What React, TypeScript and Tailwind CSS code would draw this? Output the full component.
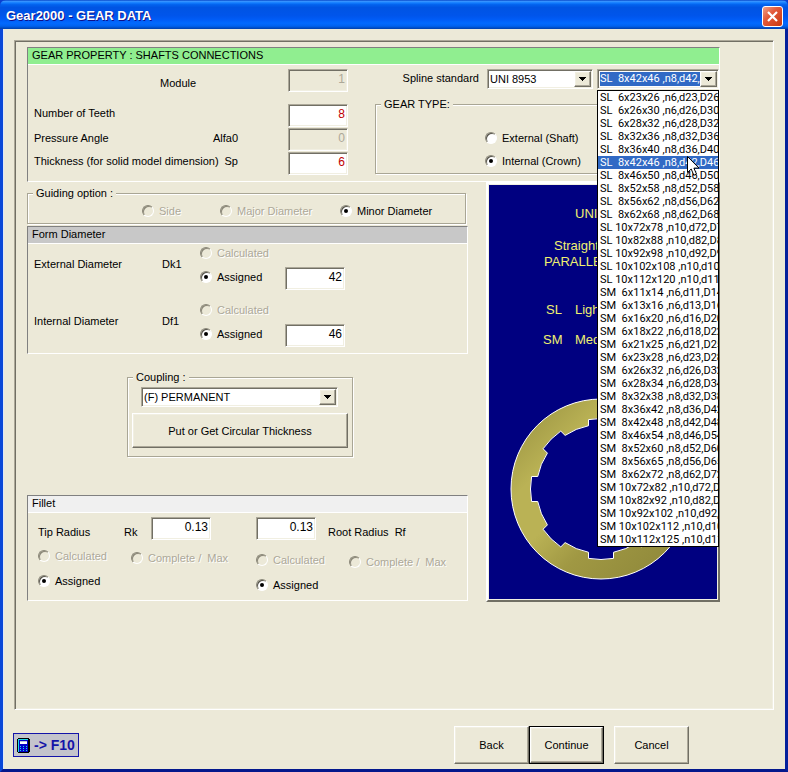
import { useState } from 'react';
import type { ReactNode } from 'react';

const SIZES = [
  'SL  6x23x26 ,n6,d23,D26',
  'SL  6x26x30 ,n6,d26,D30',
  'SL  6x28x32 ,n6,d28,D32',
  'SL  8x32x36 ,n8,d32,D36',
  'SL  8x36x40 ,n8,d36,D40',
  'SL  8x42x46 ,n8,d42,D46',
  'SL  8x46x50 ,n8,d46,D50',
  'SL  8x52x58 ,n8,d52,D58',
  'SL  8x56x62 ,n8,d56,D62',
  'SL  8x62x68 ,n8,d62,D68',
  'SL 10x72x78 ,n10,d72,D78',
  'SL 10x82x88 ,n10,d82,D88',
  'SL 10x92x98 ,n10,d92,D98',
  'SL 10x102x108 ,n10,d102,D108',
  'SL 10x112x120 ,n10,d112,D120',
  'SM  6x11x14 ,n6,d11,D14',
  'SM  6x13x16 ,n6,d13,D16',
  'SM  6x16x20 ,n6,d16,D20',
  'SM  6x18x22 ,n6,d18,D22',
  'SM  6x21x25 ,n6,d21,D25',
  'SM  6x23x28 ,n6,d23,D28',
  'SM  6x26x32 ,n6,d26,D32',
  'SM  6x28x34 ,n6,d28,D34',
  'SM  8x32x38 ,n8,d32,D38',
  'SM  8x36x42 ,n8,d36,D42',
  'SM  8x42x48 ,n8,d42,D48',
  'SM  8x46x54 ,n8,d46,D54',
  'SM  8x52x60 ,n8,d52,D60',
  'SM  8x56x65 ,n8,d56,D65',
  'SM  8x62x72 ,n8,d62,D72',
  'SM 10x72x82 ,n10,d72,D82',
  'SM 10x82x92 ,n10,d82,D92',
  'SM 10x92x102 ,n10,d92,D102',
  'SM 10x102x112 ,n10,d102,D112',
  'SM 10x112x125 ,n10,d112,D125',
];

const SUNKEN = 'border border-t-[#aca899] border-l-[#aca899] border-r-white border-b-white shadow-[inset_1px_1px_0_#716f64,inset_-1px_-1px_0_#f1efe2]';
const RAISED = 'border border-t-white border-l-white border-r-[#716f64] border-b-[#716f64] shadow-[inset_-1px_-1px_0_#aca899,inset_1px_1px_0_#f1efe2]';

function NumberBox({ id, value, disabled, red, label }: {
  id: string; value: string; disabled?: boolean; red?: boolean; label?: string;
}) {
  return (
    <input
      id={id}
      aria-label={label}
      defaultValue={value}
      disabled={disabled}
      className={`h-[23px] w-[60px] shrink-0 pr-[2px] pb-[3px] text-right text-[12px] outline-none ${SUNKEN} ${
        disabled ? 'bg-[#ece9d8] text-[#aca899]' : red ? 'bg-white text-[#c00000]' : 'bg-white text-black'
      }`}
    />
  );
}

function Radio({ name, label, checked, disabled }: {
  name: string; label: string; checked?: boolean; disabled?: boolean;
}) {
  return (
    <label className={`flex h-[18px] items-center gap-[5px] whitespace-pre ${
      disabled ? 'text-[#aca899] [text-shadow:1px_1px_0_#fff]' : ''
    }`}>
      <input
        type="radio"
        name={name}
        defaultChecked={checked}
        disabled={disabled}
        className="grid size-3 shrink-0 appearance-none place-items-center rounded-full border border-t-[#8a8778] border-l-[#8a8778] border-r-white border-b-white bg-white shadow-[inset_1px_1px_0_#55534a] checked:before:size-1 checked:before:rounded-full checked:before:bg-black disabled:bg-[#ece9d8] disabled:shadow-[inset_1px_1px_0_#8a8778]"
      />
      {label}
    </label>
  );
}

function Combo({ id, label, options, value, highlighted, onChange }: {
  id: string; label?: string; options: string[]; value?: string; highlighted?: boolean;
  onChange?: (v: string) => void;
}) {
  return (
    <div className={`relative h-5 bg-white p-[2px] ${SUNKEN}`}>
      <select
        id={id}
        aria-label={label}
        value={value}
        onChange={(e) => onChange?.(e.target.value)}
        className={`block h-[14px] w-full appearance-none pr-[16px] leading-[14px] whitespace-pre outline-none ${
          highlighted ? 'bg-[#316ac5] text-white' : 'bg-white'
        }`}
      >
        {options.map((o) => (
          <option key={o} value={o}>{o.replace(/ /g, '\u00a0')}</option>
        ))}
      </select>
      <span className={`pointer-events-none absolute top-px right-px grid h-4 w-[17px] place-items-center bg-[#ece9d8] ${RAISED}`}>
        <svg width="7" height="4" viewBox="0 0 7 4" shapeRendering="crispEdges"><path d="M0 0h7L3.5 4z" /></svg>
      </span>
    </div>
  );
}

function Group({ title, className, children }: { title: string; className?: string; children: ReactNode }) {
  return (
    <fieldset className={`border border-[#a9a695] shadow-[1px_1px_0_#fff,inset_1px_1px_0_#fff] ${className}`}>
      <legend className="ml-[5px] bg-[#ece9d8] px-[3px] leading-3">{title}</legend>
      {children}
    </fieldset>
  );
}

function Section({ title, bar, children }: { title: string; bar: string; children: ReactNode }) {
  return (
    <section className="border border-t-[#808080] border-l-[#808080] border-r-white border-b-white">
      <h2 className={`h-[17px] border-b border-white pl-1 leading-[14px] ${bar}`}>{title}</h2>
      {children}
    </section>
  );
}

// ring outline with eight straight sided slots cut in the bore
function splinePath() {
  const c = 91;
  const root = 70.5;
  const land = 64.5;
  const half = 12.5;
  const pts: string[] = [];
  const at = (r: number, a: number) => `${(c + r * Math.cos(a)).toFixed(2)} ${(c + r * Math.sin(a)).toFixed(2)}`;
  for (let i = 0; i < 8; i++) {
    const a = (i * Math.PI) / 4;
    const ar = Math.asin(half / root);
    const al = Math.asin(half / land);
    pts.push(`${i === 0 ? 'M' : `A${land} ${land} 0 0 1 `}${at(land, a - al)}`);
    pts.push(`L${at(root, a - ar)}`);
    pts.push(`A${root} ${root} 0 0 1 ${at(root, a + ar)}`);
    pts.push(`L${at(land, a + al)}`);
  }
  pts.push(`A${land} ${land} 0 0 1 ${at(land, -Math.asin(half / land))}Z`);
  return `M1 91a90 90 0 1 0 180 0a90 90 0 1 0 -180 0Z ${pts.join('')}`;
}

function SplinePicture() {
  return (
    <div className="w-[234px] shrink-0 border-2 border-t-white border-l-white border-r-[#716f64] border-b-[#716f64]">
      <div className="h-[416px] overflow-hidden border border-[#f1efe2] bg-[#000080] pt-[21px] text-[13px] leading-4 whitespace-nowrap text-[#f0f070]">
        <p className="pl-[86px]">UNI 8953</p>
        <p className="pt-4 pl-[65px]">Straight sided</p>
        <p className="pl-[55px]">PARALLEL SIDES</p>
        <dl className="grid grid-cols-[32px_1fr] gap-y-[14px] pt-8 pl-[54px]">
          <dt className="pl-[3px]">SL</dt>
          <dd>Light</dd>
          <dt>SM</dt>
          <dd>Medium</dd>
        </dl>
        <svg className="mt-[50px] ml-[21px]" width="182" height="182" viewBox="0 0 182 182">
          <defs>
            <linearGradient id="brass" x1="0" y1="0" x2="1" y2="1">
              <stop offset="0" stopColor="#938d3d" />
              <stop offset="0.28" stopColor="#bab255" />
              <stop offset="0.45" stopColor="#bab255" />
              <stop offset="0.62" stopColor="#a09843" />
              <stop offset="1" stopColor="#8a8438" />
            </linearGradient>
          </defs>
          <path d={splinePath()} fill="url(#brass)" fillRule="evenodd" stroke="#fff" strokeWidth="1" />
        </svg>
      </div>
    </div>
  );
}

function SizeList({ selected, onPick }: { selected: string; onPick: (v: string) => void }) {
  return (
    <div className="absolute top-full right-0 left-0 z-10 mt-px border border-black bg-white">
      <ul role="listbox" aria-label="Spline size" className="overflow-hidden">
        {SIZES.map((s) => (
          <li
            key={s}
            role="option"
            aria-selected={s === selected}
            onClick={() => onPick(s)}
            className={`h-[13px] pl-[2px] leading-[13px] whitespace-pre ${s === selected ? 'bg-[#316ac5] text-white' : ''}`}
          >
            {s}
          </li>
        ))}
      </ul>
      <svg className="absolute top-[65px] left-[89px]" width="13" height="21" viewBox="0 0 13 21">
        <path d="M.5.5v16l3.700-3.500 2.600 6.200 2.700-1.100-2.600-6h5.100z" fill="#fff" stroke="#000" />
      </svg>
    </div>
  );
}

function DiameterRow({ id, label, symbol, value }: { id: string; label: string; symbol: string; value: string }) {
  return (
    <div className="flex items-end">
      <label htmlFor={id} className="flex w-[166px] self-start leading-10">
        <span className="w-32">{label}</span>
        <span>{symbol}</span>
      </label>
      <div className="flex w-[85px] flex-col gap-[6px] pb-1">
        <Radio name={id} label="Calculated" disabled />
        <Radio name={id} label="Assigned" checked />
      </div>
      <NumberBox id={id} value={value} />
    </div>
  );
}

function FilletRadios({ name }: { name: string }) {
  return (
    <div className="flex">
      <div className="flex w-[93px] flex-col gap-[7px]">
        <Radio name={name} label="Calculated" disabled />
        <Radio name={name} label="Assigned" checked />
      </div>
      <div className="pt-[2px]">
        <Radio name={name} label="Complete /  Max" disabled />
      </div>
    </div>
  );
}

function Calculator() {
  return (
    <svg width="13" height="15" viewBox="0 0 13 15" shapeRendering="crispEdges">
      <path d="M1 0h11v1h1v13h-1v1H1v-1H0V1h1z" fill="#000" />
      <path d="M1 1h10v13H1z" fill="#0000c8" />
      <path d="M1 1h10v1H2v12H1z" fill="#20d8e8" />
      <path d="M3 3h7v3H3z" fill="#fff" />
      <path d="M3 3h7v1H3z" fill="#b8c8d8" />
      <path d="M3 8h1v1H3zM6 8h1v1H6zM9 8h1v1H9zM3 10h1v1H3zM6 10h1v1H6zM9 10h1v1H9zM3 12h1v1H3zM6 12h1v1H6zM9 12h1v1H9z" fill="#20d8e8" />
    </svg>
  );
}

export default function App() {
  const [standard, setStandard] = useState('UNI 8953');
  const [size, setSize] = useState('SL  8x42x46 ,n8,d42,D46');
  const [coupling, setCoupling] = useState('(F) PERMANENT');

  return (
    <div className="flex min-h-screen flex-col bg-[#0a3fd0] font-['Liberation_Sans',Arial,sans-serif] text-[11px] leading-[14px] text-black">
      <header className="flex h-[29px] items-center justify-between rounded-t-md bg-[linear-gradient(#0a48c8_0%,#3593ff_5%,#127dff_10%,#0262ee_16%,#0054e3_26%,#0055eb_54%,#005bf5_66%,#026afe_80%,#0062ef_90%,#0040ab_100%)] pt-[3px] pr-[5px] pl-[6px]">
        <h1 className="text-[13px] font-bold text-white [text-shadow:1px_1px_0_#0f1089]">Gear2000 - GEAR DATA</h1>
        <button aria-label="Close" className="grid size-[21px] place-items-center rounded-[3px] border border-white bg-[linear-gradient(135deg,#f0a088_0%,#e2593a_40%,#c8380f_100%)]">
          <svg width="13" height="13" viewBox="0 0 13 13">
            <path d="M2 2l9 9M11 2l-9 9" stroke="#fff" strokeWidth="2.200" />
          </svg>
        </button>
      </header>

      <div className="flex flex-1 flex-col border-r-[3px] border-b-[3px] border-l-[3px] border-l-[#0a48d8] border-r-[#04209c] border-b-[#04188c] bg-[#ece9d8] shadow-[inset_1px_0_0_#dfe8f8]">
        <main className={`mx-[11px] mt-[11px] flex-1 pt-[6px] pr-[53px] pb-4 pl-3 ${SUNKEN}`}>
          <Section title="GEAR PROPERTY : SHAFTS CONNECTIONS" bar="bg-[#90ee90]">
            <div className="flex justify-between pt-1 pb-[6px] pl-[6px]">
              <div className="grid h-[106px] grid-cols-[204px_60px] content-between gap-x-[50px]">
                <label htmlFor="module" className="mb-[6px] pl-[126px] leading-[28px]">Module</label>
                <NumberBox id="module" value="1" disabled />
                <label htmlFor="teeth" className="leading-[18px]">Number of Teeth</label>
                <NumberBox id="teeth" value="8" red />
                <label htmlFor="angle" className="flex justify-between leading-[20px]">
                  <span>Pressure Angle</span>
                  <span>Alfa0</span>
                </label>
                <NumberBox id="angle" value="0" disabled />
                <label htmlFor="thickness" className="flex justify-between leading-[18px]">
                  <span>Thickness (for solid model dimension)</span>
                  <span>Sp</span>
                </label>
                <NumberBox id="thickness" value="6" red />
              </div>

              <div className="w-[344px]">
                <div className="flex justify-end gap-1">
                  <label htmlFor="standard" className="pr-1 leading-[18px]">Spline standard</label>
                  <div className="w-[106px]">
                    <Combo id="standard" options={['UNI 8953']} value={standard} onChange={setStandard} />
                  </div>
                  <div className="relative w-[122px] font-['Roboto','Liberation_Sans',sans-serif]">
                    <Combo id="size" label="Spline size" options={SIZES} value={size} highlighted onChange={setSize} />
                    <SizeList selected={size} onPick={setSize} />
                  </div>
                </div>
                <Group title="GEAR TYPE:" className="mt-[9px] mr-1 h-[76px]">
                  <div className="flex flex-col gap-[5px] pt-[19px] pl-[109px]">
                    <Radio name="gear-type" label="External (Shaft)" />
                    <Radio name="gear-type" label="Internal (Crown)" checked />
                  </div>
                </Group>
              </div>
            </div>
          </Section>

          <div className="flex justify-between gap-[18px]">
            <div className="flex-1 pt-[5px]">
              <Group title="Guiding option :" className="mr-[2px] mb-[2px] h-[37px]">
                <div className="flex pt-[3px] pl-[114px]">
                  <div className="w-[78px]"><Radio name="guiding" label="Side" disabled /></div>
                  <div className="w-[120px]"><Radio name="guiding" label="Major Diameter" disabled /></div>
                  <Radio name="guiding" label="Minor Diameter" checked />
                </div>
              </Group>

              <Section title="Form Diameter" bar="bg-[#c8c8c8]">
                <div className="flex flex-col gap-[11px] pb-[6px] pl-[6px]">
                  <DiameterRow id="dk1" label="External Diameter" symbol="Dk1" value="42" />
                  <DiameterRow id="df1" label="Internal Diameter" symbol="Df1" value="46" />
                </div>
              </Section>

              <Group title="Coupling :" className="mt-[17px] ml-[100px] h-[86px] w-[226px]">
                <div className="px-1 pt-1">
                  <div className="mr-[10px] ml-[9px]">
                    <Combo id="coupling" label="Coupling" options={['(F) PERMANENT']} value={coupling} onChange={setCoupling} />
                  </div>
                  <button className={`mt-[6px] h-[35px] w-full ${RAISED}`}>Put or Get Circular Thickness</button>
                </div>
              </Group>

              <div className="pt-[38px]">
                <Section title="Fillet" bar="bg-[#f0f0f0]">
                  <div className="flex pt-1 pb-[6px] pl-[10px]">
                    <div className="w-[218px]">
                      <div className="flex">
                        <label htmlFor="rk" className="flex w-[113px] leading-[30px]">
                          <span className="w-[86px]">Tip Radius</span>
                          <span>Rk</span>
                        </label>
                        <NumberBox id="rk" value="0.13" />
                      </div>
                      <FilletRadios name="tip" />
                    </div>
                    <div>
                      <div className="mb-1 flex">
                        <NumberBox id="rf" value="0.13" />
                        <label htmlFor="rf" className="pl-3 leading-[30px] whitespace-pre">Root Radius  Rf</label>
                      </div>
                      <FilletRadios name="root" />
                    </div>
                  </div>
                </Section>
              </div>
            </div>

            <SplinePicture />
          </div>
        </main>

        <footer className="flex items-center justify-between pt-4 pr-24 pb-[5px] pl-[10px]">
          <button className="flex h-6 items-center gap-1 border border-[#1414a8] bg-[#c4c4cc] px-[3px] text-[14px] font-bold text-[#1414a8]">
            <Calculator />
            -&gt; F10
          </button>
          <div className="flex">
            <button className={`h-[38px] w-[75px] ${RAISED}`}>Back</button>
            <div className="mr-[10px] border border-black">
              <button className={`block h-9 w-[73px] ${RAISED}`}>Continue</button>
            </div>
            <button className={`h-[38px] w-[75px] ${RAISED}`}>Cancel</button>
          </div>
        </footer>
      </div>
    </div>
  );
}
